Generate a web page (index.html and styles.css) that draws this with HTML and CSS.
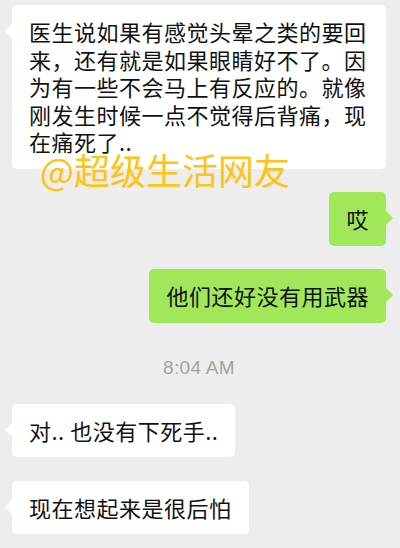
FILE: index.html
```html
<!DOCTYPE html>
<html lang="zh-CN">
<head>
    <meta charset="UTF-8">
    <meta name="viewport" content="width=device-width, initial-scale=1.0">
    <title>聊天记录</title>
    <link rel="stylesheet" href="styles.css">
</head>
<body>
    <div class="chat">
        <div class="row left">
            <div class="bubble">医生说如果有感觉头晕之类的要回来，还有就是如果眼睛好不了。因为有一些不会马上有反应的。就像刚发生时候一点不觉得后背痛，现在痛死了..</div>
        </div>
        <div class="row right">
            <div class="bubble">哎</div>
        </div>
        <div class="row right">
            <div class="bubble">他们还好没有用武器</div>
        </div>
        <div class="time">8:04 AM</div>
        <div class="row left">
            <div class="bubble">对.. 也没有下死手..</div>
        </div>
        <div class="row left">
            <div class="bubble">现在想起来是很后怕</div>
        </div>

        <!-- watermark over the first message -->
        <div class="watermark">@超级生活网友</div>
    </div>
</body>
</html>
```

FILE: styles.css
```css
body {
    margin: 0;
    background-color: #ededed;
    font-family: "Noto Sans CJK SC", "Noto Sans", sans-serif;
}

.chat {
    position: relative;
    display: flex;
    flex-direction: column;
    padding: 5px 14px 0 12px;
}

.row {
    display: flex;
    margin-bottom: 23.5px;
}

.row.left {
    justify-content: flex-start;
}

.row.right {
    justify-content: flex-end;
}

.bubble {
    position: relative;
    box-sizing: border-box;
    max-width: 374px;
    padding: 13px 17px 13px 17px;
    border-radius: 5px;
    background-color: #ffffff;
    color: #111;
    font-size: 22px;
    line-height: 27.5px;
    letter-spacing: 0.5px;
}

.bubble::before {
    content: "";
    position: absolute;
    top: 19px;
    border-top: 7px solid transparent;
    border-bottom: 7px solid transparent;
}

.left .bubble::before {
    left: -7px;
    border-right: 7px solid #ffffff;
}

.right .bubble {
    background-color: #a0e75a;
}

.right .bubble::before {
    right: -7px;
    border-left: 7px solid #a0e75a;
}

.time {
    margin-top: 12px;
    margin-bottom: 25.5px;
    text-align: center;
    font-family: "Liberation Sans", Arial, sans-serif;
    font-size: 19px;
    line-height: 20px;
    color: #a3a3a3;
    letter-spacing: 0.3px;
}

.watermark {
    position: absolute;
    left: 40px;
    top: 145px;
    font-size: 36px;
    line-height: 48px;
    color: #ffc312;
}
```
